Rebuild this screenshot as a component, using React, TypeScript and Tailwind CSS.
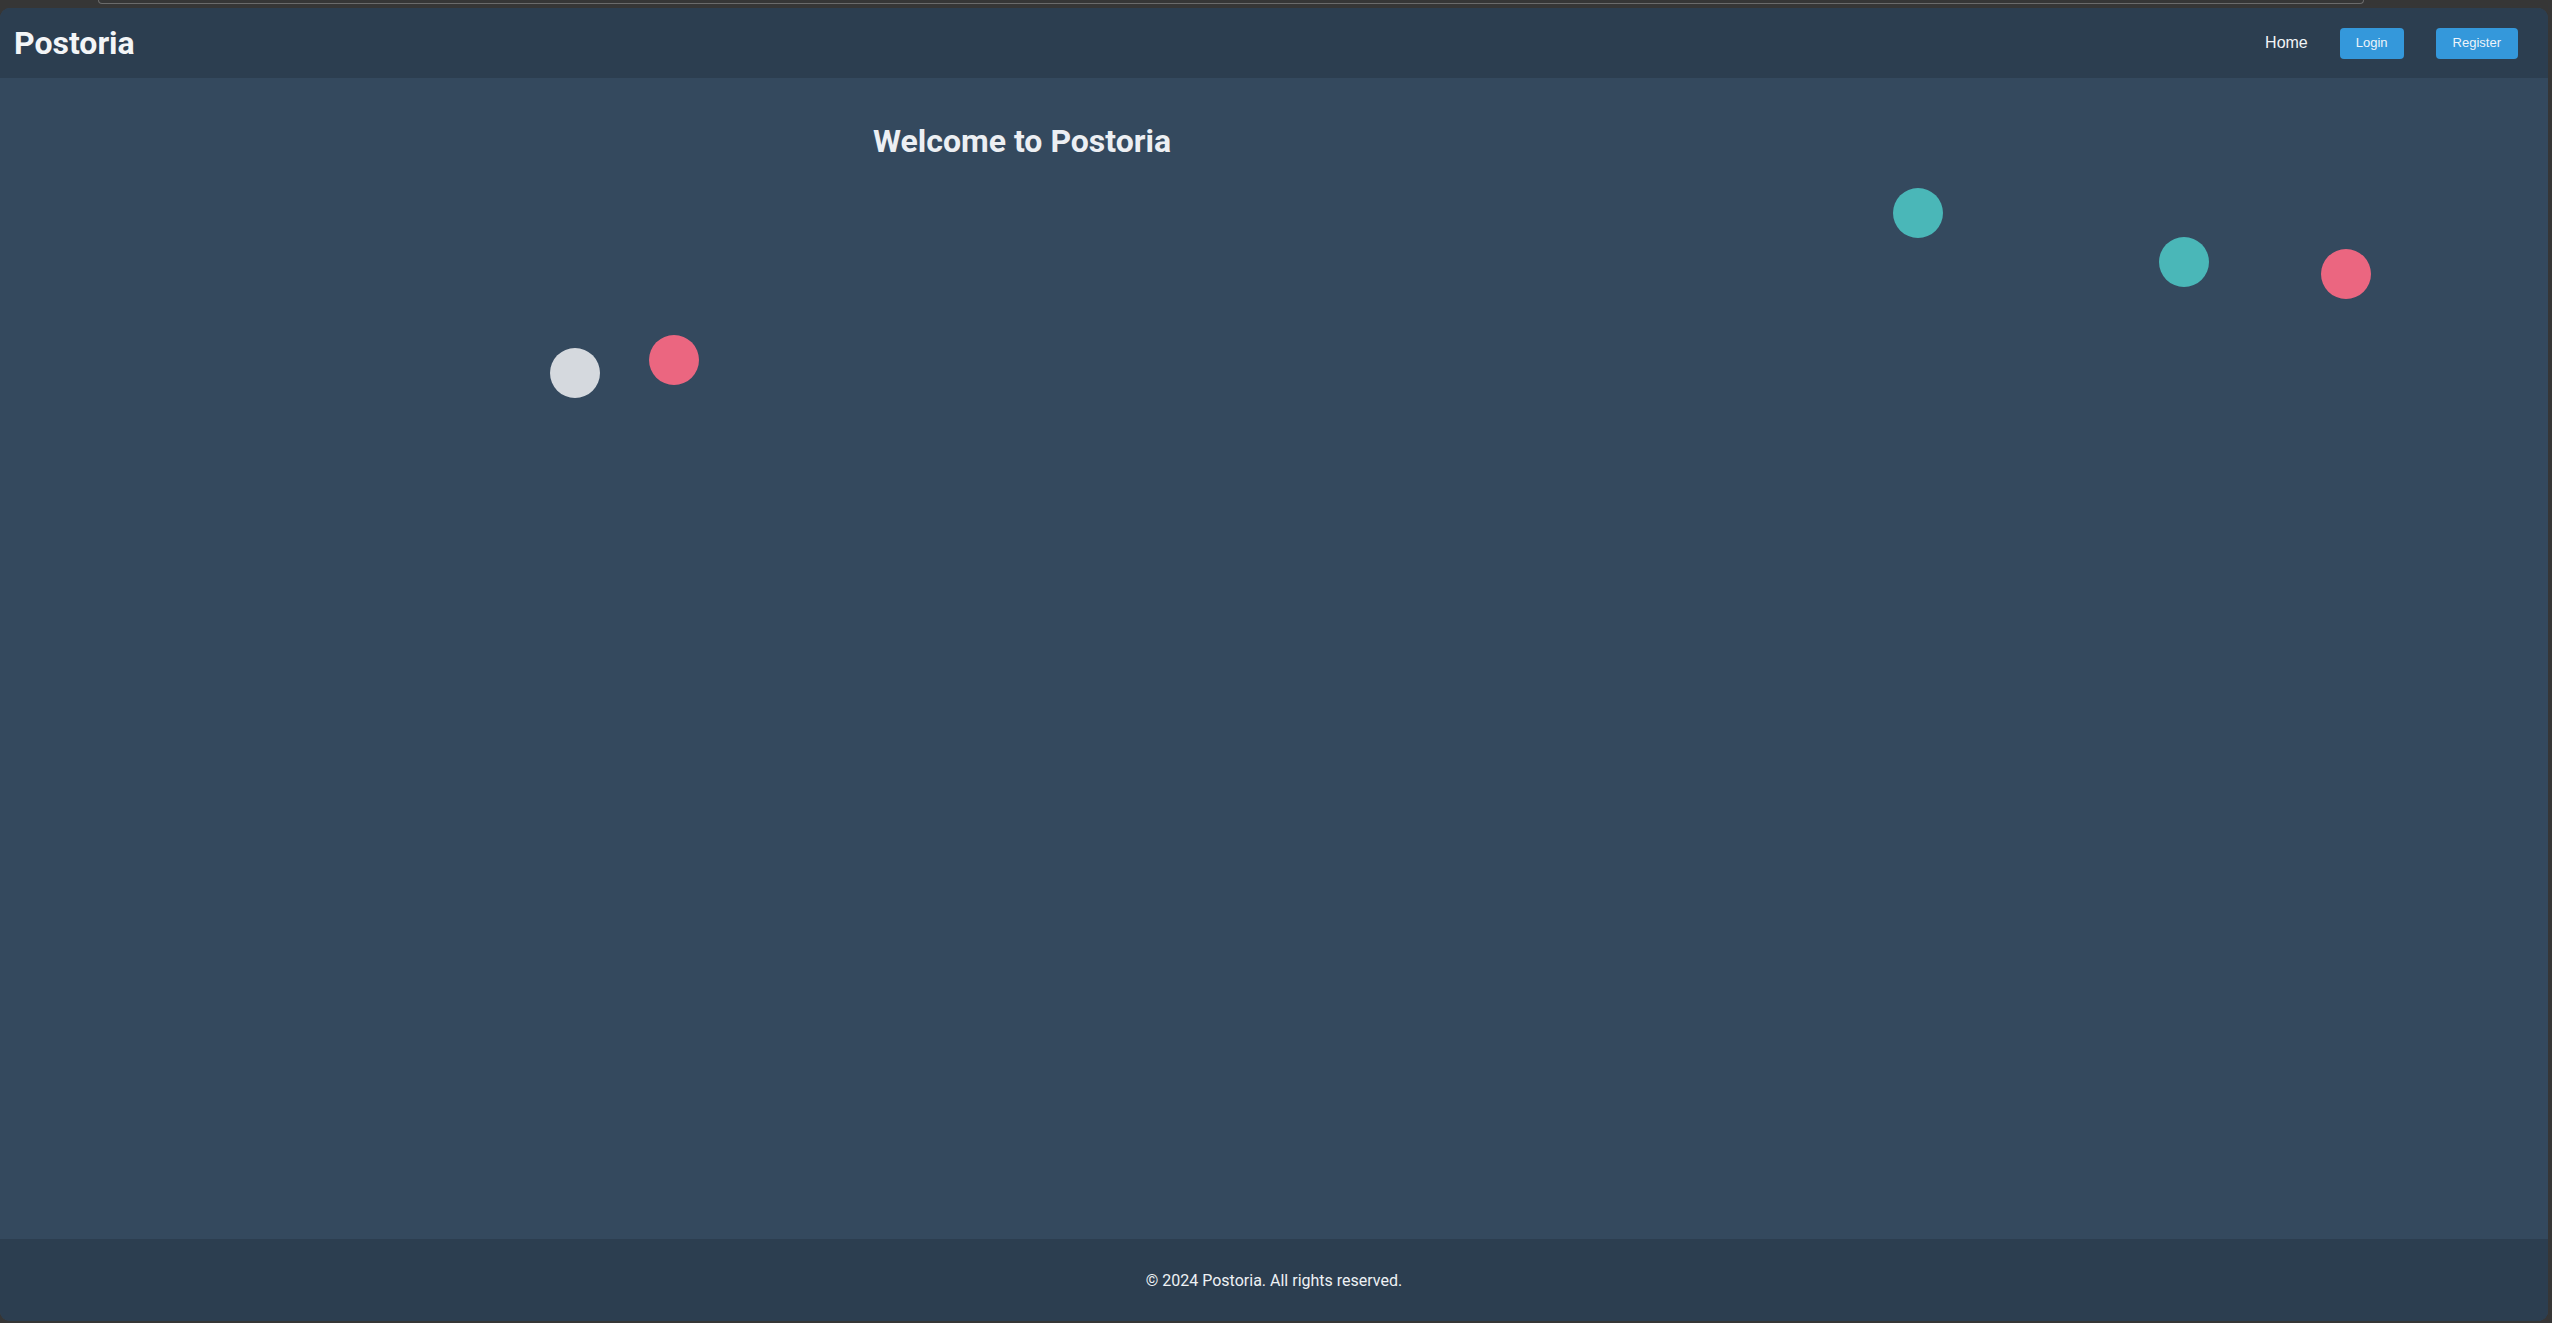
const dots = [
  { left: 550, top: 270, color: 'bg-[#d5d9de]' },
  { left: 649, top: 257, color: 'bg-[#eb6680]' },
  { left: 1893, top: 110, color: 'bg-[#4ab7b8]' },
  { left: 2159, top: 159, color: 'bg-[#4ab7b8]' },
  { left: 2321, top: 171, color: 'bg-[#eb6680]' },
];

const App = () => {
  return (
    <div className="flex flex-col h-screen w-full bg-[#363636] pr-[4px] pb-[2px]">
      <div className="h-[8px] shrink-0 pl-[98px] pr-[184px]">
        <div className="h-[4px] border-b border-x border-[#6b6b6b] rounded-b-[6px]" />
      </div>
      <div
        className="flex flex-col flex-1 rounded-[10px] overflow-hidden bg-[#34495e]"
        style={{ fontFamily: 'Roboto, "Liberation Sans", sans-serif' }}
      >
        <header className="flex items-center justify-between h-[70px] shrink-0 bg-[#2c3e50] pl-[14px] pr-[30px]">
          <h1 className="text-[32px] font-bold text-[#f3f5f7] leading-none">Postoria</h1>
          <nav
            className="flex items-center gap-8"
            style={{ fontFamily: '"Liberation Sans", Arial, sans-serif' }}
          >
            <a className="text-[16px] text-[#f2f4f6]">Home</a>
            <button className="h-[31px] px-4 rounded-[4px] bg-[#3498db] text-[13px] text-[#eef4fa]">
              Login
            </button>
            <button className="h-[31px] px-[17px] rounded-[4px] bg-[#3498db] text-[13px] text-[#eef4fa]">
              Register
            </button>
          </nav>
        </header>

        <main className="relative flex-1">
          <h2 className="ml-[873px] mt-[44px] text-[32px] leading-[38px] font-bold text-[#eceff3]">
            Welcome to Postoria
          </h2>
          {dots.map((d, i) => (
            <div
              key={i}
              className={`absolute w-[50px] h-[50px] rounded-full ${d.color}`}
              style={{ left: d.left, top: d.top }}
            />
          ))}
        </main>

        <footer className="flex items-center justify-center h-[82px] shrink-0 bg-[#2c3e50] pt-[2px]">
          <p className="text-[16px] text-[#eef1f4]">© 2024 Postoria. All rights reserved.</p>
        </footer>
      </div>
    </div>
  );
};

export default App;
